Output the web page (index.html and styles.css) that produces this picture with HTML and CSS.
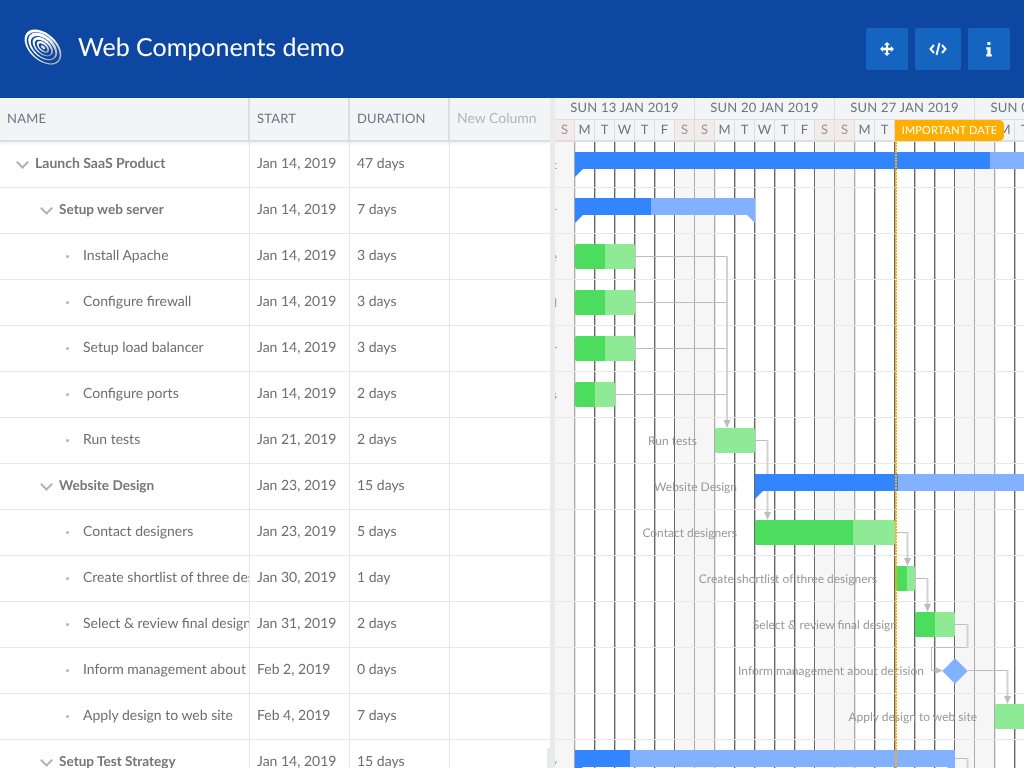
FILE: index.html
```html
<!DOCTYPE html>
<html lang="en">
<head>
<meta charset="utf-8">
<title>Web Components demo</title>
<link rel="stylesheet" href="styles.css">
</head>
<body>
<header class="topbar">
  <div class="brand">
    <svg class="logo" viewBox="-19 -19 38 38" width="38" height="38" aria-hidden="true">
      <defs>
        <linearGradient id="lg" x1="-1" x2="1" y1="0" y2="0" gradientUnits="objectBoundingBox">
          <stop offset="0" stop-color="#fff"/>
          <stop offset=".75" stop-color="#fff"/>
          <stop offset="1" stop-color="#a9adb3"/>
        </linearGradient>
      </defs>
      <g transform="rotate(42)">
        <ellipse rx="21.500" ry="13.500" fill="url(#lg)"/>
        <ellipse cx=".6" cy=".4" rx="19.500" ry="11.700" fill="#0d47a1"/>
        <ellipse cx="-.6" cy="-.3" rx="17" ry="10.500" fill="url(#lg)"/>
        <ellipse cx=".4" cy=".4" rx="14.500" ry="8.500" fill="#0d47a1"/>
        <ellipse cx="-.4" cy="-.2" rx="12" ry="7.200" fill="url(#lg)"/>
        <ellipse cx=".4" cy=".4" rx="10" ry="5.500" fill="#0d47a1"/>
        <ellipse cx="-.2" cy="-.1" rx="7.400" ry="4.200" fill="url(#lg)"/>
        <ellipse cx=".2" cy=".3" rx="5.400" ry="2.700" fill="#0d47a1"/>
        <ellipse cx=".2" cy=".2" rx="2.600" ry="1.400" fill="#dfe3ea"/>
      </g>
    </svg>
    <h1 class="title">Web Components demo</h1>
  </div>
  <div class="tools">
    <button class="tool" type="button" aria-label="Move">
      <svg viewBox="0 0 16 16" width="14" height="14"><path fill="#fff" d="M8 0l3.500 3.500H9.300V6.700h3.200V4.500L16 8l-3.500 3.500V9.300H9.300v3.200h2.200L8 16l-3.500-3.500h2.200V9.300H3.500v2.200L0 8l3.500-3.500v2.200h3.200V3.500H4.500z"/></svg>
    </button>
    <button class="tool tool-wide" type="button" aria-label="Code">
      <svg viewBox="0 0 18 14" width="18" height="14"><path fill="none" stroke="#fff" stroke-width="2" d="M5 3L1.500 7 5 11M13 3l3.500 4L13 11M10.500 1L7.500 13"/></svg>
    </button>
    <button class="tool" type="button" aria-label="Info">
      <svg viewBox="0 0 8 16" width="8" height="15"><path fill="#fff" d="M2.300 0h3.200v3.200H2.300zM1 5.500h4.700V13H7v2.500H1V13h1.300V8H1z"/></svg>
    </button>
  </div>
</header>

<main class="gantt">
  <section class="grid">
    <div class="grid-head">
      <div class="cell col-name">NAME</div>
      <div class="cell col-start">START</div>
      <div class="cell col-dur">DURATION</div>
      <div class="cell col-new new-col">New Column</div>
    </div>
    <div class="row parent"><div class="cell col-name lvl0"><span class="chev"></span><span class="nm">Launch SaaS Product</span></div><div class="cell col-start">Jan 14, 2019</div><div class="cell col-dur">47 days</div><div class="cell col-new"></div></div>
    <div class="row parent"><div class="cell col-name lvl1"><span class="chev"></span><span class="nm">Setup web server</span></div><div class="cell col-start">Jan 14, 2019</div><div class="cell col-dur">7 days</div><div class="cell col-new"></div></div>
    <div class="row"><div class="cell col-name lvl2"><span class="dot"></span><span class="nm">Install Apache</span></div><div class="cell col-start">Jan 14, 2019</div><div class="cell col-dur">3 days</div><div class="cell col-new"></div></div>
    <div class="row"><div class="cell col-name lvl2"><span class="dot"></span><span class="nm">Configure firewall</span></div><div class="cell col-start">Jan 14, 2019</div><div class="cell col-dur">3 days</div><div class="cell col-new"></div></div>
    <div class="row"><div class="cell col-name lvl2"><span class="dot"></span><span class="nm">Setup load balancer</span></div><div class="cell col-start">Jan 14, 2019</div><div class="cell col-dur">3 days</div><div class="cell col-new"></div></div>
    <div class="row"><div class="cell col-name lvl2"><span class="dot"></span><span class="nm">Configure ports</span></div><div class="cell col-start">Jan 14, 2019</div><div class="cell col-dur">2 days</div><div class="cell col-new"></div></div>
    <div class="row"><div class="cell col-name lvl2"><span class="dot"></span><span class="nm">Run tests</span></div><div class="cell col-start">Jan 21, 2019</div><div class="cell col-dur">2 days</div><div class="cell col-new"></div></div>
    <div class="row parent"><div class="cell col-name lvl1"><span class="chev"></span><span class="nm">Website Design</span></div><div class="cell col-start">Jan 23, 2019</div><div class="cell col-dur">15 days</div><div class="cell col-new"></div></div>
    <div class="row"><div class="cell col-name lvl2"><span class="dot"></span><span class="nm">Contact designers</span></div><div class="cell col-start">Jan 23, 2019</div><div class="cell col-dur">5 days</div><div class="cell col-new"></div></div>
    <div class="row"><div class="cell col-name lvl2"><span class="dot"></span><span class="nm">Create shortlist of three designers</span></div><div class="cell col-start">Jan 30, 2019</div><div class="cell col-dur">1 day</div><div class="cell col-new"></div></div>
    <div class="row"><div class="cell col-name lvl2"><span class="dot"></span><span class="nm">Select &amp; review final design</span></div><div class="cell col-start">Jan 31, 2019</div><div class="cell col-dur">2 days</div><div class="cell col-new"></div></div>
    <div class="row"><div class="cell col-name lvl2"><span class="dot"></span><span class="nm">Inform management about decision</span></div><div class="cell col-start">Feb 2, 2019</div><div class="cell col-dur">0 days</div><div class="cell col-new"></div></div>
    <div class="row"><div class="cell col-name lvl2"><span class="dot"></span><span class="nm">Apply design to web site</span></div><div class="cell col-start">Feb 4, 2019</div><div class="cell col-dur">7 days</div><div class="cell col-new"></div></div>
    <div class="row parent"><div class="cell col-name lvl1"><span class="chev"></span><span class="nm">Setup Test Strategy</span></div><div class="cell col-start">Jan 14, 2019</div><div class="cell col-dur">15 days</div><div class="cell col-new"></div></div>
  </section>

  <div class="splitter"><span class="collapse"></span></div>

  <section class="timeline">
    <div class="tl-head">
      <div class="weeks">
        <div class="week first">SUN 13 JAN 2019</div>
        <div class="week">SUN 20 JAN 2019</div>
        <div class="week">SUN 27 JAN 2019</div>
        <div class="week">SUN 03 FEB 2019</div>
      </div>
      <div class="days">
        <span class="day we">S</span><span class="day">M</span><span class="day">T</span><span class="day">W</span><span class="day">T</span><span class="day">F</span><span class="day we">S</span>
        <span class="day we">S</span><span class="day">M</span><span class="day">T</span><span class="day">W</span><span class="day">T</span><span class="day">F</span><span class="day we">S</span>
        <span class="day we">S</span><span class="day">M</span><span class="day">T</span><span class="day">W</span><span class="day">T</span><span class="day">F</span><span class="day we">S</span>
        <span class="day we">S</span><span class="day">M</span><span class="day">T</span><span class="day">W</span>
      </div>
    </div>
    <div class="tl-body">
      <div class="cols">
        <span class="tc we l"></span><span class="tc"></span><span class="tc"></span><span class="tc"></span><span class="tc"></span><span class="tc"></span><span class="tc we l"></span>
        <span class="tc we l"></span><span class="tc"></span><span class="tc"></span><span class="tc"></span><span class="tc"></span><span class="tc"></span><span class="tc we l"></span>
        <span class="tc we l"></span><span class="tc"></span><span class="tc"></span><span class="tc"></span><span class="tc"></span><span class="tc"></span><span class="tc we l"></span>
        <span class="tc we l"></span><span class="tc"></span><span class="tc"></span><span class="tc"></span>
      </div>
      <div class="rowlines">
        <span class="rl"></span><span class="rl"></span><span class="rl"></span><span class="rl"></span><span class="rl"></span><span class="rl"></span><span class="rl"></span><span class="rl"></span><span class="rl"></span><span class="rl"></span><span class="rl"></span><span class="rl"></span><span class="rl"></span><span class="rl"></span>
      </div>

      <svg class="deps" width="469" height="626" viewBox="555 142 469 626" aria-hidden="true">
        <g fill="none" stroke="#bdbdbd">
          <path d="M635 256.500H726.500M635 302.500H726.500M635 348.500H726.500M615 394.500H726.500"/>
          <path d="M755 440.500H767.500"/>
          <path d="M895 532.500H907.500"/>
          <path d="M915 578.500H927.500"/>
          <path d="M955 624.500H967.500M967.500 647.500H931.500V670.500H936"/>
          <path d="M968 670.500H1007.500"/>
          <path d="M955 758.500H967.500"/>
        </g>
        <g fill="none" stroke="#d2d2d2" stroke-width="2">
          <path d="M727 256V422"/>
          <path d="M767.500 440V514"/>
          <path d="M907.500 532V560"/>
          <path d="M927.500 578V606"/>
          <path d="M967.500 624V648"/>
          <path d="M1007.500 670V698"/>
          <path d="M967.500 758V768"/>
        </g>
        <g fill="#bdbdbd">
          <path d="M723.500 420h7L727 428z"/>
          <path d="M764 512h7L767.500 520z"/>
          <path d="M904 558h7L907.500 566z"/>
          <path d="M924 604h7L927.500 612z"/>
          <path d="M1004 696h7L1007.500 704z"/>
          <path d="M935 667l8 3.500-8 3.500z"/>
        </g>
      </svg>

      <span class="lbl" style="top:15px;right:467px">Launch SaaS Product</span>
      <span class="lbl" style="top:61px;right:467px">Setup web server</span>
      <span class="lbl" style="top:107px;right:467px">Install Apache</span>
      <span class="lbl" style="top:153px;right:467px">Configure firewall</span>
      <span class="lbl" style="top:199px;right:467px">Setup load balancer</span>
      <span class="lbl" style="top:245px;right:467px">Configure ports</span>
      <span class="lbl" style="top:291px;right:327px">Run tests</span>
      <span class="lbl" style="top:337px;right:287px">Website Design</span>
      <span class="lbl" style="top:383px;right:287px">Contact designers</span>
      <span class="lbl" style="top:429px;right:147px">Create shortlist of three designers</span>
      <span class="lbl" style="top:475px;right:127px">Select &amp; review final design</span>
      <span class="lbl" style="top:521px;right:100px">Inform management about decision</span>
      <span class="lbl" style="top:567px;right:47px">Apply design to web site</span>
      <span class="lbl" style="top:613px;right:467px">Setup Test Strategy</span>

      <div class="bar summary notch-l" style="top:10px;left:20px;width:449px"><i class="fill" style="width:415px"></i></div>
      <div class="bar summary notch-l notch-r" style="top:56px;left:20px;width:180px"><i class="fill" style="width:76px"></i></div>
      <div class="bar task" style="top:102px;left:20px;width:60px"><i class="fill" style="width:30px"></i></div>
      <div class="bar task" style="top:148px;left:20px;width:60px"><i class="fill" style="width:30px"></i></div>
      <div class="bar task" style="top:194px;left:20px;width:60px"><i class="fill" style="width:30px"></i></div>
      <div class="bar task" style="top:240px;left:20px;width:40px"><i class="fill" style="width:20px"></i></div>
      <div class="bar task" style="top:286px;left:160px;width:40px"></div>
      <div class="bar summary notch-l" style="top:332px;left:200px;width:269px"><i class="fill" style="width:143px"></i></div>
      <div class="bar task" style="top:378px;left:200px;width:140px"><i class="fill" style="width:98px"></i></div>
      <div class="bar task" style="top:424px;left:340px;width:20px"><i class="fill" style="width:12px"></i></div>
      <div class="bar task" style="top:470px;left:360px;width:40px"><i class="fill" style="width:20px"></i></div>
      <span class="milestone" style="top:520px;left:391px"></span>
      <div class="bar task" style="top:562px;left:440px;width:84px"></div>
      <div class="bar summary notch-l notch-r" style="top:608px;left:20px;width:380px"><i class="fill" style="width:55px"></i></div>

      <span class="today"></span>
    </div>
    <span class="today-flag">IMPORTANT DATE</span>
  </section>
</main>
</body>
</html>
```

FILE: styles.css
```css
* { box-sizing: border-box; }
html, body { margin: 0; height: 100%; overflow: hidden; }
body {
  font-family: Lato, "Liberation Sans", sans-serif;
  font-size: 14px;
  color: #6e6e6e;
  background: #fff;
  display: flex;
  flex-direction: column;
  text-rendering: geometricPrecision;
}

.topbar {
  height: 98px;
  flex: none;
  background: #0d47a1;
  display: flex;
  align-items: center;
  justify-content: space-between;
  padding: 0 14px 0 24px;
}
.brand { display: flex; align-items: center; gap: 16px; padding-bottom: 4px; will-change: transform; }
.logo { display: block; overflow: visible; }
.title { margin: 0; font-size: 25px; font-weight: 400; color: #fff; }
.tools { display: flex; gap: 7px; }
.tool {
  width: 42px;
  height: 42px;
  padding: 0;
  border: 0;
  border-radius: 2px;
  background: #1565c0;
  display: flex;
  align-items: center;
  justify-content: center;
}
.tool-wide { width: 46px; }

.gantt { flex: 1; display: flex; min-height: 0; }
.grid { width: 550px; flex: none; overflow: hidden; will-change: transform; }
.grid-head {
  height: 44px;
  display: flex;
  background: #f3f4f6;
  border-bottom: 2px solid #dcdee2;
  box-shadow: 0 2px 3px rgba(0,0,0,.05);
  position: relative;
  color: #6b7480;
  font-size: 13px;
  letter-spacing: .2px;
}
.grid-head .cell { padding-bottom: 2px; }
.row {
  height: 46px;
  display: flex;
  border-bottom: 1px solid #e8e8e8;
}
.row .cell { padding-bottom: 4px; }
.row.parent .nm { font-weight: 700; font-size: 13.600px; color: #777; }
.row.parent .lvl0 .nm { font-size: 14px; }
.cell {
  display: flex;
  align-items: center;
  padding-left: 7px;
  border-right: 1px solid #e6e6e6;
  white-space: nowrap;
  overflow: hidden;
}
.grid-head .cell { border-right: 2px solid #dcdee2; }
.col-name { width: 250px; flex: none; }
.col-start { width: 100px; flex: none; }
.col-dur { width: 100px; flex: none; }
.col-new { flex: 1; }
.col-new, .grid-head .col-new { border-right: 0; }
.grid-head .new-col { color: #b5b5b5; letter-spacing: 0; font-size: 14px; padding-bottom: 3px; }
.lvl0 { padding-left: 15px; }
.lvl1 { padding-left: 39px; }
.lvl2 { padding-left: 66px; }
.chev {
  width: 12px;
  height: 8px;
  flex: none;
  margin-right: 8px;
  margin-top: 3px;
  position: relative;
}
.chev::before {
  content: "";
  position: absolute;
  left: 2.500px;
  top: -2px;
  width: 7px;
  height: 7px;
  border-right: 2.500px solid #b0b0b0;
  border-bottom: 2.500px solid #b0b0b0;
  transform: rotate(45deg);
}
.dot {
  width: 3px;
  height: 3px;
  flex: none;
  border-radius: 50%;
  background: #b4b4b4;
  margin-right: 14px;
  margin-top: 3px;
}

.splitter { width: 5px; flex: none; background: #e9eaec; position: relative; }
.collapse {
  position: absolute;
  left: -3px;
  top: 650px;
  width: 8px;
  height: 20px;
  background: #e9eaec;
}

.timeline { flex: 1; min-width: 0; display: flex; flex-direction: column; position: relative; overflow: hidden; will-change: transform; }
.tl-head { height: 44px; flex: none; background: #f3f4f6; border-bottom: 2px solid #dcdee2; color: #6b7480; }
.weeks { display: flex; height: 22px; border-bottom: 1px solid #dcdee2; }
.week {
  width: 140px;
  flex: none;
  text-align: center;
  line-height: 18px;
  font-size: 13px;
  letter-spacing: .2px;
  border-right: 1px solid #dcdee2;
  white-space: nowrap;
}
.days { display: flex; height: 20px; }
.day {
  width: 20px;
  flex: none;
  text-align: center;
  line-height: 19px;
  font-size: 13px;
  border-right: 1px solid #dcdee2;
}
.day.we { background: #f3eaea; color: #999; }

.tl-body { flex: 1; position: relative; overflow: hidden; }
.cols { position: absolute; inset: 0; display: flex; }
.tc { width: 20px; flex: none; border-right: 1px solid #666; box-shadow: 1px 0 0 #c4c4c4; }
.tc.we { background: #f6f6f6; }
.tc.l { border-right-color: #aaa; box-shadow: 1px 0 0 #e4e4e4; }
.rowlines { position: absolute; inset: 0; }
.rl { display: block; height: 46px; border-bottom: 1px solid #e8e8e8; }
.deps { position: absolute; left: 0; top: 0; }

.lbl {
  position: absolute;
  font-size: 12px;
  line-height: 16px;
  color: #999;
  white-space: nowrap;
}
.bar { position: absolute; }
.bar .fill { display: block; height: 100%; }
.task { height: 25px; background: #8eea95; border-radius: 2px; overflow: hidden; }
.task .fill { background: #4cdd5e; }
.summary { height: 17px; background: #82b1ff; }
.summary .fill { background: #3385ff; }
.notch-l::before, .notch-r::after {
  content: "";
  position: absolute;
  top: 100%;
  width: 0;
  height: 0;
  border-top: 8px solid #3385ff;
}
.notch-l::before { left: 0; border-right: 8px solid transparent; }
.notch-r::after { right: 0; border-left: 8px solid transparent; border-top-color: #82b1ff; }
.milestone {
  position: absolute;
  width: 18px;
  height: 18px;
  background: #82b1ff;
  transform: rotate(45deg);
}
.today {
  position: absolute;
  left: 340px;
  top: 0;
  bottom: 0;
  width: 2px;
  background: repeating-linear-gradient(#ffae00 0 2px, transparent 2px 3px);
}
.today-flag {
  position: absolute;
  left: 340px;
  top: 22px;
  width: 109px;
  height: 21px;
  background: #ffae00;
  border-radius: 0 5px 5px 0;
  color: #fff;
  font-size: 11px;
  line-height: 21px;
  letter-spacing: .15px;
  text-align: center;
}
```
